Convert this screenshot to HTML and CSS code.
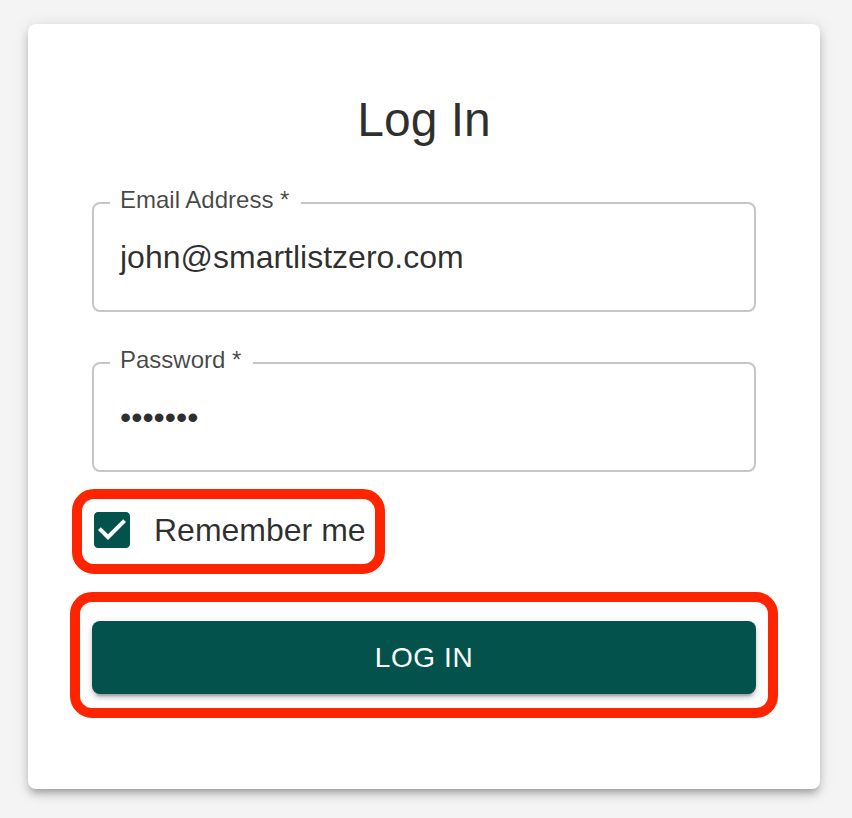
FILE: index.html
```html
<!DOCTYPE html>
<html lang="en">
<head>
<meta charset="utf-8">
<title>Log In</title>
<link rel="stylesheet" href="styles.css">
</head>
<body>
<main class="card">
  <h1 class="title">Log In</h1>
  <form class="form">
    <fieldset class="field">
      <legend class="field-label">Email Address *</legend>
      <div class="field-value">john@smartlistzero.com</div>
    </fieldset>
    <fieldset class="field field-gap">
      <legend class="field-label">Password *</legend>
      <div class="field-value field-dots">•••••••</div>
    </fieldset>
    <div class="remember">
      <span class="checkbox">
        <svg class="checkbox-icon" viewBox="0 0 24 24" width="48" height="48" aria-hidden="true">
          <path d="M19 3H5c-1.11 0-2 .9-2 2v14c0 1.1.89 2 2 2h14c1.11 0 2-.9 2-2V5c0-1.1-.89-2-2-2zm-9 14l-5-5 1.41-1.41L10 14.17l7.59-7.59L19 8l-9 9z"/>
        </svg>
      </span>
      <span class="remember-text">Remember me</span>
    </div>
    <div class="btn-wrap">
      <button type="button" class="btn">Log In</button>
    </div>
  </form>
</main>
</body>
</html>
```

FILE: styles.css
```css
html, body {
  margin: 0;
  padding: 0;
}

body {
  background: #f4f4f4;
  font-family: "Liberation Sans", Arial, sans-serif;
  color: rgba(0, 0, 0, 0.87);
  padding: 24px 0 24px 28px;
}

.card {
  width: 792px;
  box-sizing: border-box;
  background: #ffffff;
  border-radius: 8px;
  padding: 64px 64px 64px;
  box-shadow: 0 6px 6px -4px rgba(0, 0, 0, 0.2),
              0 6px 8px 0 rgba(0, 0, 0, 0.14),
              0 2px 16px 0 rgba(0, 0, 0, 0.12);
}

.title {
  margin: 0;
  font-size: 48px;
  line-height: 64px;
  font-weight: 400;
  text-align: center;
  color: rgba(0, 0, 0, 0.82);
}

.form {
  display: flex;
  flex-direction: column;
  margin: 0;
}

.field {
  margin: 36px 0 0;
  padding: 0 16px 30px;
  border: 2px solid #c6c6c6;
  border-radius: 8px;
  min-width: 0;
}

.field-label {
  padding: 0 12px 6px 10px;
  font-size: 24px;
  line-height: 24px;
  color: rgba(0, 0, 0, 0.72);
}

.field-value {
  padding: 16px 0 0 10px;
  font-size: 32px;
  line-height: 46px;
  color: rgba(0, 0, 0, 0.82);
}

.field-dots {
  letter-spacing: 0;
}

.remember {
  position: relative;
  display: flex;
  align-items: center;
  align-self: flex-start;
  margin: 16px 0 0 -22px;
  height: 84px;
}

.remember::after {
  content: "";
  position: absolute;
  left: 2px;
  top: 1px;
  width: 313px;
  height: 85px;
  box-sizing: border-box;
  border: 10px solid #fe2400;
  border-radius: 22px;
  pointer-events: none;
}

.checkbox {
  display: flex;
  padding: 18px;
}

.checkbox-icon {
  display: block;
  fill: #03524b;
}

.remember-text {
  font-size: 32px;
  line-height: 48px;
  color: rgba(0, 0, 0, 0.82);
}

.btn-wrap {
  position: relative;
  margin: 49px 0 31px;
}

.btn-wrap::after {
  content: "";
  position: absolute;
  left: -22px;
  right: -22px;
  top: -29px;
  bottom: -24px;
  border: 10px solid #fe2400;
  border-radius: 22px;
  pointer-events: none;
}

.btn {
  display: block;
  width: 100%;
  margin: 0;
  padding: 12px 32px;
  border: 0;
  border-radius: 8px;
  background: #03524b;
  color: #ffffff;
  font-family: "Liberation Sans", Arial, sans-serif;
  font-size: 28px;
  line-height: 49px;
  letter-spacing: 0.6px;
  text-transform: uppercase;
  box-shadow: 0 6px 2px -4px rgba(0, 0, 0, 0.2),
              0 4px 4px 0 rgba(0, 0, 0, 0.14),
              0 2px 10px 0 rgba(0, 0, 0, 0.12);
}
```
